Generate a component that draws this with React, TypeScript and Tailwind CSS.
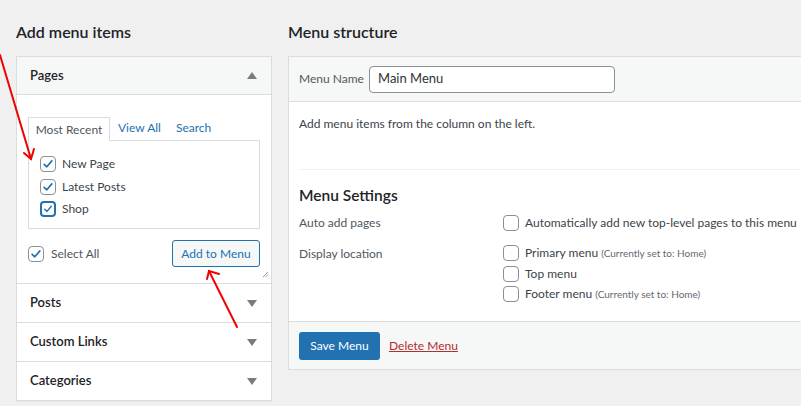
import React from "react";

const font = "font-['Lato',sans-serif]";

function Check({ checked = false, focus = false }: { checked?: boolean; focus?: boolean }) {
  return (
    <span
      className={
        "flex h-4 w-4 shrink-0 items-center justify-center rounded-[4px] bg-white " +
        (focus ? "border-2 border-[#2271b1]" : "border border-[#8c8f94]")
      }
    >
      {checked && (
        <svg viewBox="0 0 20 20" className="h-[14px] w-[14px]">
          <path d="M4.5 10.5 L8.3 14 L15.5 5.5" fill="none" stroke="#2271b1" strokeWidth="2.4" strokeLinecap="round" strokeLinejoin="round" />
        </svg>
      )}
    </span>
  );
}

function Caret({ up = false }: { up?: boolean }) {
  return (
    <svg viewBox="0 0 10 7" className="h-[7px] w-[10px]">
      <path d={up ? "M0 7 L5 0 L10 7 Z" : "M0 0 L10 0 L5 7 Z"} fill="#787c82" />
    </svg>
  );
}

function Section({ title }: { title: string }) {
  return (
    <div className="flex h-[39px] items-center justify-between border-t border-[#dcdcde] pl-[13px] pr-[14px]">
      <span className="text-[13px] font-semibold text-[#1d2327]">{title}</span>
      <Caret />
    </div>
  );
}

export default function App() {
  return (
    <div className={"relative h-[406px] overflow-hidden bg-[#f0f0f1] text-[12px] text-[#3c434a] " + font}>
      <div className="flex gap-4 pl-4 pt-[21px]">
        {/* Left column */}
        <div className="w-[256px] shrink-0">
          <h2 className="mb-[14px] h-[21px] text-[16px] font-semibold leading-[21px] text-[#1d2327]">Add menu items</h2>
          <div className="border border-[#dcdcde] bg-white shadow-[0_1px_1px_rgba(0,0,0,0.04)]">
            <div className="flex h-[38px] items-center justify-between border-b border-[#dcdcde] bg-[#f6f7f7] pl-[13px] pr-[14px]">
              <span className="text-[13px] font-semibold text-[#1d2327]">Pages</span>
              <Caret up />
            </div>
            <div className="relative px-[11px] pb-[16px] pt-[21px]">
              <div className="flex items-end">
                <div className="-mb-px h-[24px] w-[82px] border border-b-0 border-[#dcdcde] bg-white text-center leading-[24px] text-[#50575e]">
                  Most Recent
                </div>
                <span className="ml-[8px] leading-[24px] text-[#2271b1]">View All</span>
                <span className="ml-[15px] leading-[24px] text-[#2271b1]">Search</span>
              </div>
              <div className="flex h-[89px] flex-col gap-[6.5px] border border-[#dcdcde] px-[11px] pt-[15px]">
                <label className="flex h-[16px] items-center gap-[6px]">
                  <Check checked />
                  <span>New Page</span>
                </label>
                <label className="flex h-[16px] items-center gap-[6px]">
                  <Check checked />
                  <span>Latest Posts</span>
                </label>
                <label className="flex h-[16px] items-center gap-[6px]">
                  <Check checked focus />
                  <span>Shop</span>
                </label>
              </div>
              <div className="mt-[11px] flex items-center justify-between">
                <label className="flex items-center gap-[7px] text-[#50575e]">
                  <Check checked />
                  <span>Select All</span>
                </label>
                <button className="h-[27px] w-[88px] rounded-[3px] border border-[#2271b1] bg-[#f6f7f7] text-[12px] text-[#2271b1]">
                  Add to Menu
                </button>
              </div>
              <svg viewBox="0 0 8 8" className="absolute bottom-[5px] right-[2px] h-[7px] w-[7px]">
                <path d="M1 7 L7 1 M4 7 L7 4" stroke="#8c8f94" strokeWidth="1" />
              </svg>
            </div>
            <Section title="Posts" />
            <Section title="Custom Links" />
            <Section title="Categories" />
          </div>
        </div>

        {/* Right column */}
        <div className="w-[540px] shrink-0">
          <h2 className="mb-[14px] h-[21px] text-[16px] font-semibold leading-[21px] text-[#1d2327]">Menu structure</h2>
          <div className="border border-[#dcdcde] bg-white">
            <div className="flex h-[45px] items-center border-b border-[#dcdcde] bg-[#f6f7f7] px-[10px]">
              <span className="w-[62px] shrink-0 whitespace-nowrap text-[#50575e]">Menu Name</span>
              <div className="ml-[8px] flex h-[27px] w-[246px] items-center rounded-[4px] border border-[#8c8f94] bg-white px-[8px] text-[13px] text-[#2c3338]">
                Main Menu
              </div>
            </div>
            <div className="px-[10px]">
              <p className="h-[67px] pt-[12px] leading-[20px]">Add menu items from the column on the left.</p>
              <div className="border-t border-[#f0f0f1] pt-[14px]">
                <h3 className="h-[22px] text-[15.5px] font-semibold leading-[22px] text-[#1d2327]">Menu Settings</h3>
                <div className="mt-[8px] flex h-[18px] items-center">
                  <span className="w-[204px] shrink-0 text-[#50575e]">Auto add pages</span>
                  <label className="flex items-center gap-[6px] whitespace-nowrap">
                    <Check />
                    <span>Automatically add new top-level pages to this menu</span>
                  </label>
                </div>
                <div className="mt-[12px] flex pb-[18px]">
                  <span className="w-[204px] shrink-0 pt-[1px] text-[#50575e]">Display location</span>
                  <div className="flex flex-col gap-[2.5px] whitespace-nowrap">
                    <label className="flex h-[18px] items-center gap-[6px]">
                      <Check />
                      <span>
                        Primary menu <span className="text-[10px] text-[#646970]">(Currently set to: Home)</span>
                      </span>
                    </label>
                    <label className="flex h-[18px] items-center gap-[6px]">
                      <Check />
                      <span>Top menu</span>
                    </label>
                    <label className="flex h-[18px] items-center gap-[6px]">
                      <Check />
                      <span>
                        Footer menu <span className="text-[10px] text-[#646970]">(Currently set to: Home)</span>
                      </span>
                    </label>
                  </div>
                </div>
              </div>
            </div>
            <div className="flex h-[48px] items-center gap-[9px] border-t border-[#dcdcde] bg-[#f6f7f7] px-[10px]">
              <button className="h-[28px] w-[81px] rounded-[3px] bg-[#2271b1] text-[12px] text-white">Save Menu</button>
              <span className="text-[#b32d2e] underline">Delete Menu</span>
            </div>
          </div>
        </div>
      </div>

      {/* Red annotation arrows */}
      <svg className="pointer-events-none absolute left-0 top-0" width="801" height="406">
        <g stroke="#f00000" strokeWidth="2" fill="none" strokeLinecap="round">
          <path d="M0 55 L31 159" />
          <path d="M24 153 L31 159 L34 149" />
          <path d="M237 327 L209 271" />
          <path d="M207 279 L209 271 L219 274" />
        </g>
      </svg>
    </div>
  );
}
